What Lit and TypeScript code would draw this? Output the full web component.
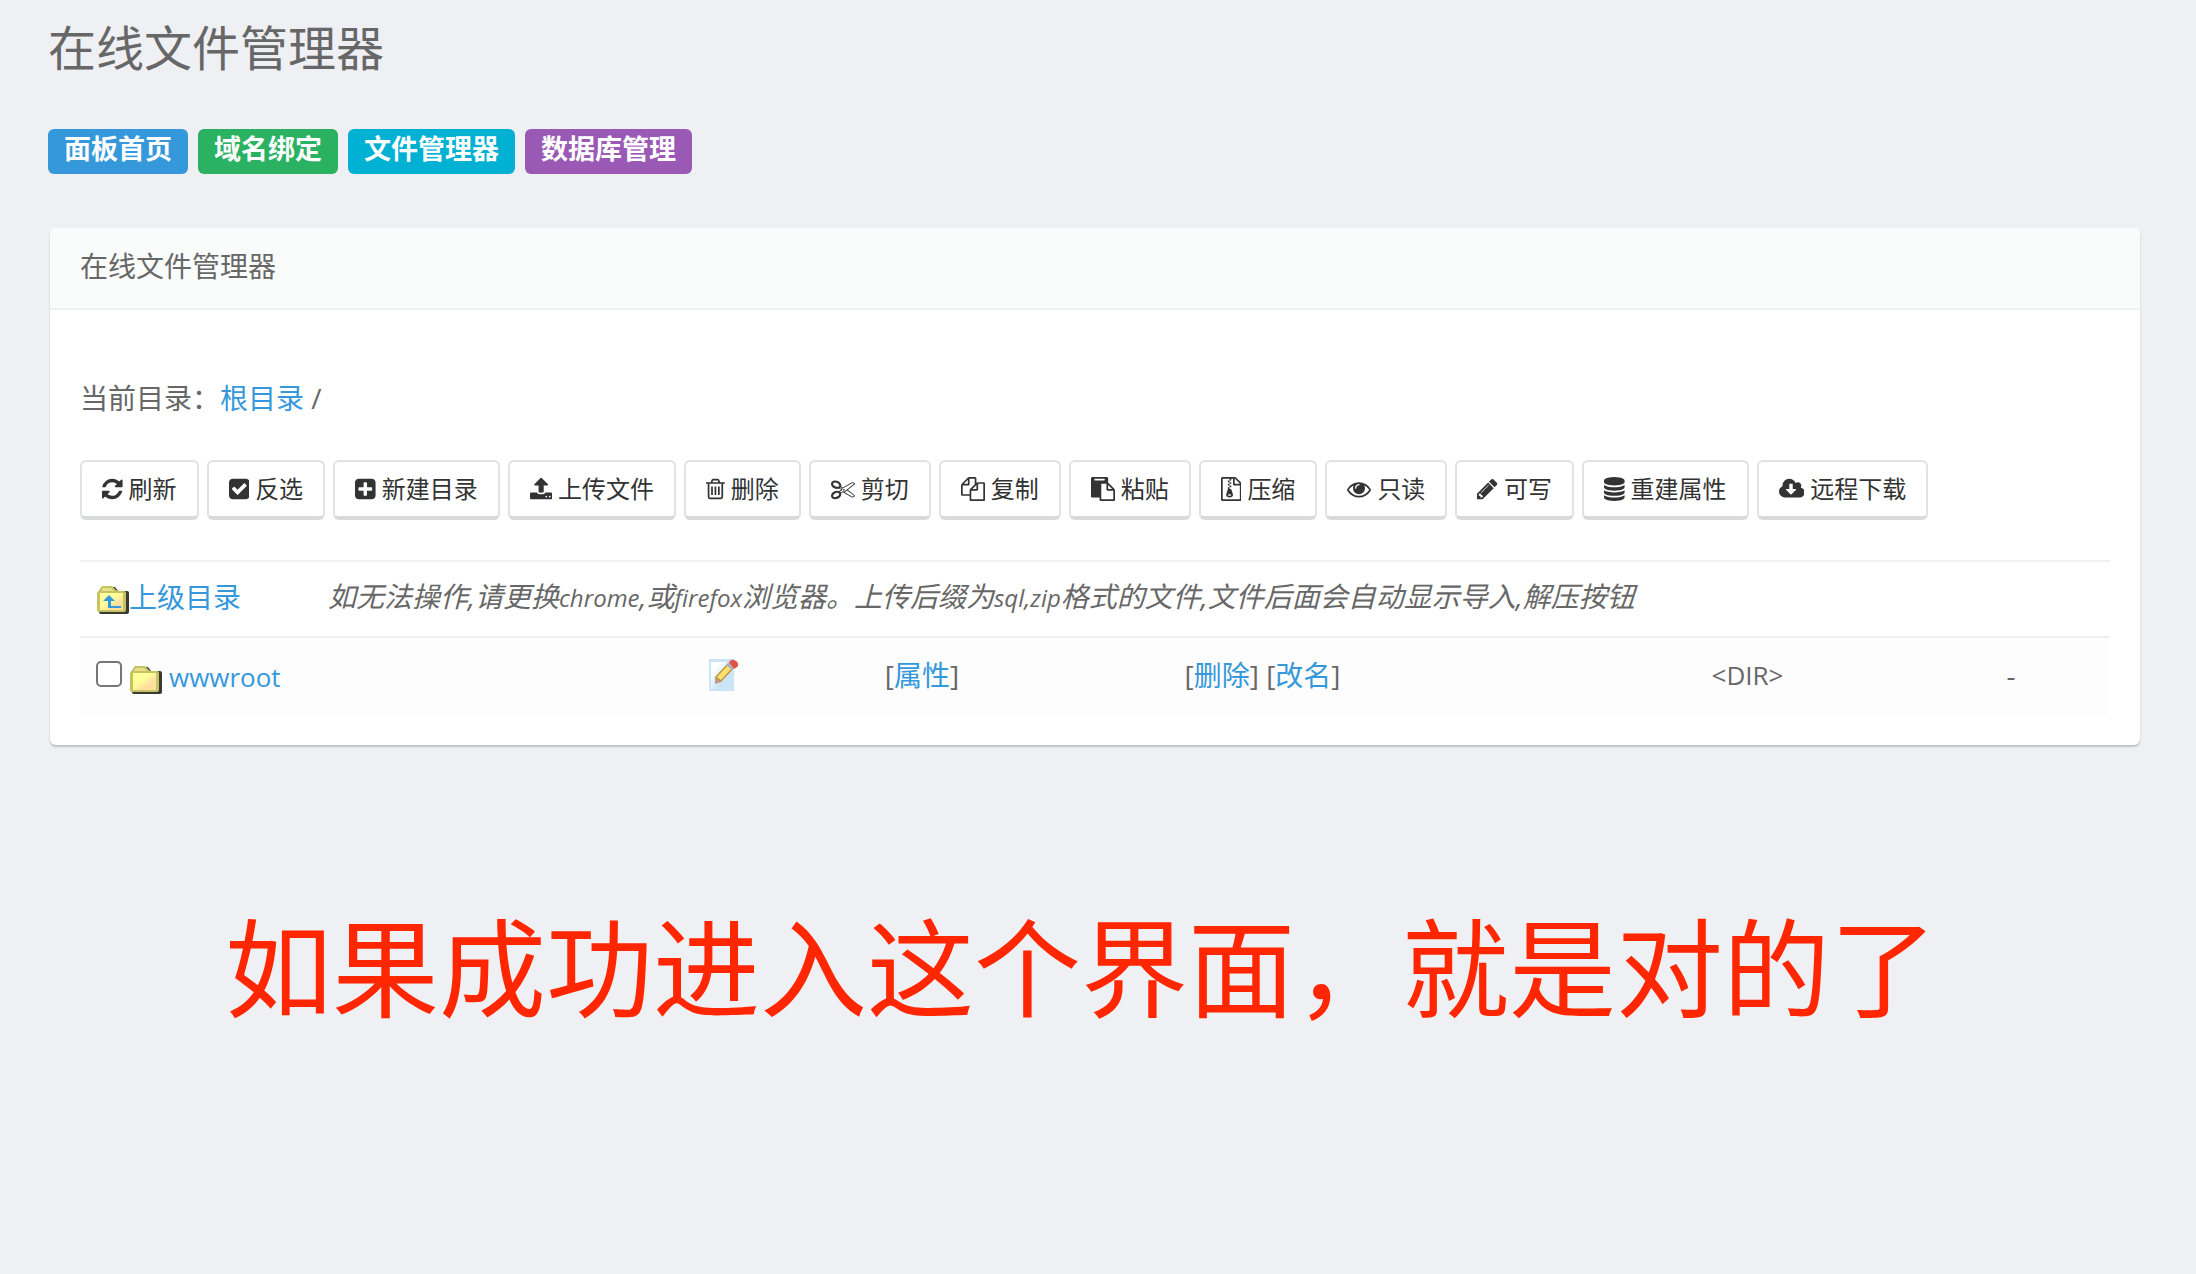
import { LitElement, html, css, svg } from "lit";
import { customElement } from "lit/decorators.js";

interface Icon { w: number; d: string }
interface Tool { label: string; icon: Icon }

const ICONS: Record<string, Icon> = {
  refresh: { w: 1536, d: "M1511 1056q0 5-1 7-64 268-268 434.500t-478 166.500q-146 0-282.500-55t-243.500-157l-129 129q-19 19-45 19t-45-19-19-45v-448q0-26 19-45t45-19h448q26 0 45 19t19 45-19 45l-137 137q71 66 161 102t187 36q134 0 250-65t186-179q11-17 53-117 8-23 30-23h192q13 0 22.500 9.500t9.500 22.500zM1536 256v448q0 26-19 45t-45 19h-448q-26 0-45-19t-19-45 19-45l138-138q-148-137-349-137-134 0-250 65t-186 179q-11 17-53 117-8 23-30 23h-199q-13 0-22.500-9.500t-9.500-22.500v-7q65-268 270-434.500t480-166.500q146 0 284 55.500t245 156.500l130-129q19-19 45-19t45 19 19 45z" },
  check: { w: 1536, d: "M685 1299l614-614q19-19 19-45t-19-45l-102-102q-19-19-45-19t-45 19l-467 467-211-211q-19-19-45-19t-45 19l-102 102q-19 19-19 45t19 45l358 358q19 19 45 19t45-19zM1536 416v960q0 119-84.500 203.500t-203.500 84.500h-960q-119 0-203.500-84.500t-84.500-203.500v-960q0-119 84.500-203.500t203.500-84.500h960q119 0 203.500 84.500t84.500 203.500z" },
  plus: { w: 1536, d: "M1280 960v-128q0-26-19-45t-45-19h-320v-320q0-26-19-45t-45-19h-128q-26 0-45 19t-19 45v320h-320q-26 0-45 19t-19 45v128q0 26 19 45t45 19h320v320q0 26 19 45t45 19h128q26 0 45-19t19-45v-320h320q26 0 45-19t19-45zM1536 416v960q0 119-84.500 203.500t-203.500 84.500h-960q-119 0-203.500-84.500t-84.500-203.500v-960q0-119 84.500-203.500t203.500-84.500h960q119 0 203.500 84.500t84.500 203.500z" },
  upload: { w: 1664, d: "M1280 1472q0-26-19-45t-45-19-45 19-19 45 19 45 45 19 45-19 19-45zM1536 1472q0-26-19-45t-45-19-45 19-19 45 19 45 45 19 45-19 19-45zM1664 1248v320q0 40-28 68t-68 28h-1472q-40 0-68-28t-28-68v-320q0-40 28-68t68-28h427q21 56 70.500 92t110.500 36h256q61 0 110.500-36t70.500-92h427q40 0 68 28t28 68zM1339 600q-17 40-59 40h-256v448q0 26-19 45t-45 19h-256q-26 0-45-19t-19-45v-448h-256q-42 0-59-40-17-39 14-69l448-448q18-19 45-19t45 19l448 448q31 30 14 69z" },
  trash: { w: 1408, d: "M512 736v576q0 14-9 23t-23 9h-64q-14 0-23-9t-9-23v-576q0-14 9-23t23-9h64q14 0 23 9t9 23zM768 736v576q0 14-9 23t-23 9h-64q-14 0-23-9t-9-23v-576q0-14 9-23t23-9h64q14 0 23 9t9 23zM1024 736v576q0 14-9 23t-23 9h-64q-14 0-23-9t-9-23v-576q0-14 9-23t23-9h64q14 0 23 9t9 23zM1152 1460v-948h-896v948q0 22 7 40.500t14.500 27 10.500 8.500h832q3 0 10.500-8.500t14.500-27 7-40.500zM480 384h448l-48-117q-7-9-17-11h-317q-10 2-17 11zM1408 416v64q0 14-9 23t-23 9h-96v948q0 83-47 143.500t-113 60.500h-832q-66 0-113-58.500t-47-141.500v-952h-96q-14 0-23-9t-9-23v-64q0-14 9-23t23-9h309l70-167q15-37 54-63t79-26h320q40 0 79 26t54 63l70 167h309q14 0 23 9t9 23z" },
  cut: { w: 1792, d: "M960 896q26 0 45 19t19 45-19 45-45 19-45-19-19-45 19-45 45-19zM1260 960l507 398q28 20 25 56-5 35-35 51l-128 64q-13 7-29 7-17 0-31-8l-690-387-110 66q-8 4-12 5 14 49 10 97-7 77-56 147.500t-132 123.500q-132 84-277 84-136 0-222-78-90-84-79-207 7-76 56-147t131-124q132-84 278-84 83 0 151 31 9-13 22-22l122-73-122-73q-13-9-22-22-68 31-151 31-146 0-278-84-82-53-131-124t-56-147q-5-59 15.500-113t63.500-93q85-79 222-79 145 0 277 84 83 52 132 123t56 148q4 48-10 97 4 1 12 5l110 66 690-387q14-8 31-8 16 0 29 7l128 64q30 16 35 51 3 36-25 56zM579 700q46-42 21-108t-106-117q-92-59-192-59-74 0-113 36-46 42-21 108t106 117q92 59 192 59 74 0 113-36zM494 1445q81-51 106-117t-21-108q-39-36-113-36-100 0-192 59-81 51-106 117t21 108q39 36 113 36 100 0 192-59zM672 832l96 58v-11q0-36 33-56l14-8-79-47-26 26q-3 3-10 11t-12 12q-2 2-4 3.500t-3 2.500zM896 1056l96 32 736-576-128-64-768 431v113l-160 96 9 8q2 2 7 6 4 4 11 12t11 12l26 26zM1600 1472l128-64-520-408-177 138q-2 3-13 7z" },
  copy: { w: 1792, d: "M1696 384q40 0 68 28t28 68v1216q0 40-28 68t-68 28h-960q-40 0-68-28t-28-68v-288h-544q-40 0-68-28t-28-68v-672q0-40 20-88t48-76l408-408q28-28 76-48t88-20h416q40 0 68 28t28 68v328q68-40 128-40h416zM1152 597l-299 299h299v-299zM512 213l-299 299h299v-299zM708 860l316-316v-416h-384v416q0 40-28 68t-68 28h-416v640h512v-256q0-40 20-88t48-76zM1664 1664v-1152h-384v416q0 40-28 68t-68 28h-416v640h896z" },
  paste: { w: 1792, d: "M768 1664h896v-640h-416q-40 0-68-28t-28-68v-416h-384v1152zM1024 224v-64q0-13-9.500-22.500t-22.500-9.500h-704q-13 0-22.500 9.500t-9.500 22.500v64q0 13 9.500 22.500t22.500 9.500h704q13 0 22.500-9.500t9.500-22.500zM1280 896h299l-299-299v299zM1792 1024v672q0 40-28 68t-68 28h-960q-40 0-68-28t-28-68v-160h-544q-40 0-68-28t-28-68v-1344q0-40 28-68t68-28h1088q40 0 68 28t28 68v328q21 13 36 28l408 408q28 28 48 76t20 88z" },
  zip: { w: 1536, d: "M640 384v-128h-128v128h128zM768 512v-128h-128v128h128zM640 640v-128h-128v128h128zM768 768v-128h-128v128h128zM1468 380q28 28 48 76t20 88v1152q0 40-28 68t-68 28h-1344q-40 0-68-28t-28-68v-1600q0-40 28-68t68-28h896q40 0 88 20t76 48zM1024 136v376h376q-10-29-22-41l-313-313q-12-12-41-22zM1408 1664v-1024h-416q-40 0-68-28t-28-68v-416h-128v128h-128v-128h-512v1536h1280zM781 943l107 349q8 27 8 52 0 83-72.500 137.500t-183.500 54.500-183.500-54.500-72.500-137.500q0-25 8-52 21-63 120-396v-128h128v128h79q22 0 39 13t23 34zM640 1408q53 0 90.500-19t37.500-45-37.500-45-90.500-19-90.500 19-37.500 45 37.500 45 90.500 19z" },
  eye: { w: 1792, d: "M1664 960q-152-236-381-353 61 104 61 225 0 185-131.500 316.500t-316.500 131.500-316.500-131.500-131.500-316.500q0-121 61-225-229 117-381 353 133 205 333.500 326.500t434.500 121.500 434.500-121.500 333.500-326.500zM944 576q0-20-14-34t-34-14q-125 0-214.500 89.500t-89.500 214.500q0 20 14 34t34 14 34-14 14-34q0-86 61-147t147-61q20 0 34-14t14-34zM1792 960q0 34-20 69-140 230-376.500 368.500t-499.500 138.500-499.500-139-376.500-368q-20-35-20-69t20-69q140-229 376.500-368t499.500-139 499.500 139 376.500 368q20 35 20 69z" },
  pencil: { w: 1536, d: "M363 1536l91-91-235-235-91 91v107h128v128h107zM886 608q0-22-22-22-10 0-17 7l-542 542q-7 7-7 17 0 22 22 22 10 0 17-7l542-542q7-7 7-17zM832 416l416 416-832 832h-416v-416zM1515 512q0 53-37 90l-166 166-416-416 166-165q36-38 90-38 53 0 91 38l235 234q37 39 37 91z" },
  database: { w: 1536, d: "M768 768q237 0 443-43t325-127v170q0 69-103 128t-280 93.500-385 34.500-385-34.500-280-93.500-103-128v-170q119 84 325 127t443 43zM768 1536q237 0 443-43t325-127v170q0 69-103 128t-280 93.500-385 34.500-385-34.500-280-93.500-103-128v-170q119 84 325 127t443 43zM768 1152q237 0 443-43t325-127v170q0 69-103 128t-280 93.500-385 34.500-385-34.500-280-93.500-103-128v-170q119 84 325 127t443 43zM768 0q208 0 385 34.500t280 93.500 103 128v128q0 69-103 128t-280 93.500-385 34.500-385-34.500-280-93.500-103-128v-128q0-69 103-128t280-93.500 385-34.500z" },
  cloud: { w: 1920, d: "M1280 928q0-14-9-23t-23-9h-224v-352q0-13-9.500-22.500t-22.500-9.500h-192q-13 0-22.500 9.500t-9.500 22.500v352h-224q-13 0-22.500 9.500t-9.500 22.500q0 14 9 23l352 352q9 9 23 9t23-9l351-351q10-12 10-24zM1920 1152q0 159-112.500 271.500t-271.500 112.500h-1088q-185 0-316.500-131.500t-131.500-316.500q0-130 70-240t188-165q-2-30-2-43 0-212 150-362t362-150q156 0 285.500 87t188.500 231q71-62 166-62 106 0 181 75t75 181q0 76-41 138 130 31 213.500 135.500t83.500 238.500z" },
};

const TOOLS: Tool[] = [
  { label: "刷新", icon: ICONS.refresh },
  { label: "反选", icon: ICONS.check },
  { label: "新建目录", icon: ICONS.plus },
  { label: "上传文件", icon: ICONS.upload },
  { label: "删除", icon: ICONS.trash },
  { label: "剪切", icon: ICONS.cut },
  { label: "复制", icon: ICONS.copy },
  { label: "粘贴", icon: ICONS.paste },
  { label: "压缩", icon: ICONS.zip },
  { label: "只读", icon: ICONS.eye },
  { label: "可写", icon: ICONS.pencil },
  { label: "重建属性", icon: ICONS.database },
  { label: "远程下载", icon: ICONS.cloud },
];

const NAV = [
  { label: "面板首页", tone: "blue" },
  { label: "域名绑定", tone: "green" },
  { label: "文件管理器", tone: "cyan" },
  { label: "数据库管理", tone: "purple" },
];

const folder = (up: boolean) => html`
  <svg class="folder" viewBox="0 0 32 28" aria-hidden="true">
    <defs>
      <linearGradient id="fill" x1="0" y1="0" x2="1" y2="1">
        <stop offset="0.4" stop-color="#ffff9c"></stop>
        <stop offset="0.7" stop-color="#ffdf9c"></stop>
      </linearGradient>
    </defs>
    <path fill="#3a3a34" d="M15 1h3l3 4h9q2 0 2 2v19q0 2-2 2H4q-2 0-2-2z"></path>
    <path fill="#c6c363" d="M5 0h10l5 5h7q2 0 2 2v17q0 2-2 2H2q-2 0-2-2V7l2-3z"></path>
    <path fill="#e9e08c" d="M6 2h8l3 3H4z"></path>
    <path fill="url(#fill)" d="M3 7h23v17H3z"></path>
    ${up ? svg`<path fill="#3598db" d="M12 9l6 6h-4v5h10v2H11v-7H6z"></path>` : null}
  </svg>`;

const editIcon = html`
  <svg class="edit" viewBox="0 0 30 34" aria-hidden="true">
    <defs>
      <linearGradient id="sheet" x1="0" y1="0" x2="1" y2="1">
        <stop offset="0.2" stop-color="#ffffff"></stop>
        <stop offset="0.65" stop-color="#cbe5f6"></stop>
      </linearGradient>
    </defs>
    <path fill="#cbe5f6" d="M1 1h25v32H1z"></path>
    <path fill="url(#sheet)" d="M3 4h21v27H3z"></path>
    <path fill="#bd9442" d="M7 19L20 5l6 5-13 14-6 1z"></path>
    <path fill="#fbe071" d="M9 19L20 7l4 3-11 12z"></path>
    <path fill="#c29a86" d="M7 19l6 5-6 2z"></path>
    <path fill="#a9b4bd" d="M18 7l3-3 6 5-3 3z"></path>
    <path fill="#e2544a" d="M21 4q3-4 7-1t1 6l-3 2z"></path>
  </svg>`;

@customElement("app-root")
export class AppRoot extends LitElement {
  static styles = css`
    :host {
      display: block;
      box-sizing: border-box;
      min-height: 100vh;
      padding: 12px 56px 48px 48px;
      background: #eff0f4;
      color: #676767;
      font: 28px/40px "Open Sans", "Noto Sans CJK SC", sans-serif;
    }
    * { box-sizing: border-box; }
    a { color: #3598db; text-decoration: none; }
    .title { margin: 0; font-size: 48px; line-height: 72px; font-weight: 400; }
    .nav { display: flex; gap: 10px; margin-top: 45px; }
    .tag {
      height: 45px;
      padding: 0 16px;
      border-radius: 6px;
      color: #fff;
      font-size: 27px;
      line-height: 40px;
      font-weight: 700;
    }
    .blue { background: #3598db; }
    .green { background: #2ab162; }
    .cyan { background: #00b1d4; }
    .purple { background: #9b59b6; }
    .panel {
      margin: 54px 0 0 2px;
      border-radius: 6px;
      background: #fff;
      box-shadow: 0 2px 2px rgba(0, 0, 0, 0.2);
    }
    .head {
      margin: 0;
      padding: 18px 30px 22px;
      border-bottom: 2px solid #eff1f1;
      border-radius: 6px 6px 0 0;
      background: #fafcfb;
      font-size: 28px;
      line-height: 40px;
      font-weight: 400;
    }
    .body { padding: 68px 30px 30px; }
    .path { margin: 0; }
    .tools { display: flex; flex-wrap: wrap; gap: 8px; margin-top: 42px; }
    .tool {
      display: flex;
      align-items: center;
      gap: 6px;
      height: 60px;
      padding: 0 20px;
      border: 2px solid #e2e2e2;
      border-bottom: 4px solid #d9dada;
      border-radius: 6px;
      background: #fff;
      color: #333;
      font: 24px/32px "Open Sans", "Noto Sans CJK SC", sans-serif;
      white-space: nowrap;
    }
    .glyph { display: block; width: auto; height: 24px; fill: currentColor; }
    .files {
      width: 100%;
      margin-top: 40px;
      border-collapse: collapse;
      table-layout: fixed;
    }
    .files td { padding: 14px 16px 18px; border-top: 2px solid #eff0f0; }
    .files .entry td { height: 78px; padding: 14px 0 18px; background: #fdfdfd; text-align: center; }
    .files .entry .name { padding: 16px 0 16px 16px; text-align: left; }
    .files .entry .actions { padding-right: 78px; }
    .c1 { width: 232px; }
    .c2 { width: 309px; }
    .c3 { width: 203px; }
    .c4 { width: 196px; }
    .c5 { width: 563px; }
    .c6 { width: 329px; }
    .row { display: flex; align-items: center; }
    .folder { width: 32px; height: 28px; flex: none; }
    .up .folder { margin: 5px 0 0 1px; }
    .pick {
      appearance: none;
      flex: none;
      width: 26px;
      height: 26px;
      margin: 0 8px 6px 0;
      border: 2px solid #767676;
      border-radius: 5px;
      background: #fff;
    }
    .entry .folder { margin: 7px 7px 0 0; }
    .latin { font-size: 26px; }
    .note .latin { font-size: 24px; }
    .edit { display: block; width: 30px; height: 34px; margin: 0 auto; }
    .note { font-style: italic; white-space: nowrap; }
    .message {
      margin: 151px 0 0 177px;
      color: #ff2600;
      font-size: 107px;
      line-height: 144px;
    }
  `;

  render() {
    return html`
      <h1 class="title">在线文件管理器</h1>
      <nav class="nav">
        ${NAV.map((n) => html`<a class="tag ${n.tone}" href="#">${n.label}</a>`)}
      </nav>
      <section class="panel">
        <h2 class="head">在线文件管理器</h2>
        <div class="body">
          <p class="path">当前目录：<a href="#">根目录</a> /</p>
          <div class="tools">
            ${TOOLS.map((t) => html`
              <button class="tool" type="button">
                <svg class="glyph" viewBox="0 0 ${t.icon.w} 1792" aria-hidden="true">
                  <path d=${t.icon.d}></path>
                </svg>${t.label}
              </button>`)}
          </div>
          <table class="files">
            <colgroup>
              <col class="c1"><col class="c2"><col class="c3"><col class="c4">
              <col class="c5"><col class="c6"><col>
            </colgroup>
            <tbody>
              <tr>
                <td><a class="row up" href="#">${folder(true)}上级目录</a></td>
                <td class="note" colspan="6">如无法操作,请更换<span class="latin">chrome</span>,或<span class="latin">firefox</span>浏览器。上传后缀为<span class="latin">sql,zip</span>格式的文件,文件后面会自动显示导入,解压按钮</td>
              </tr>
              <tr class="entry">
                <td class="name" colspan="2">
                  <div class="row">
                    <input class="pick" type="checkbox" aria-label="wwwroot">
                    ${folder(false)}<a class="latin" href="#">wwwroot</a>
                  </div>
                </td>
                <td><a href="#" aria-label="编辑">${editIcon}</a></td>
                <td>[<a href="#">属性</a>]</td>
                <td class="actions">[<a href="#">删除</a>] [<a href="#">改名</a>]</td>
                <td class="latin">&lt;DIR&gt;</td>
                <td>-</td>
              </tr>
            </tbody>
          </table>
        </div>
      </section>
      <p class="message">如果成功进入这个界面，就是对的了</p>
    `;
  }
}
